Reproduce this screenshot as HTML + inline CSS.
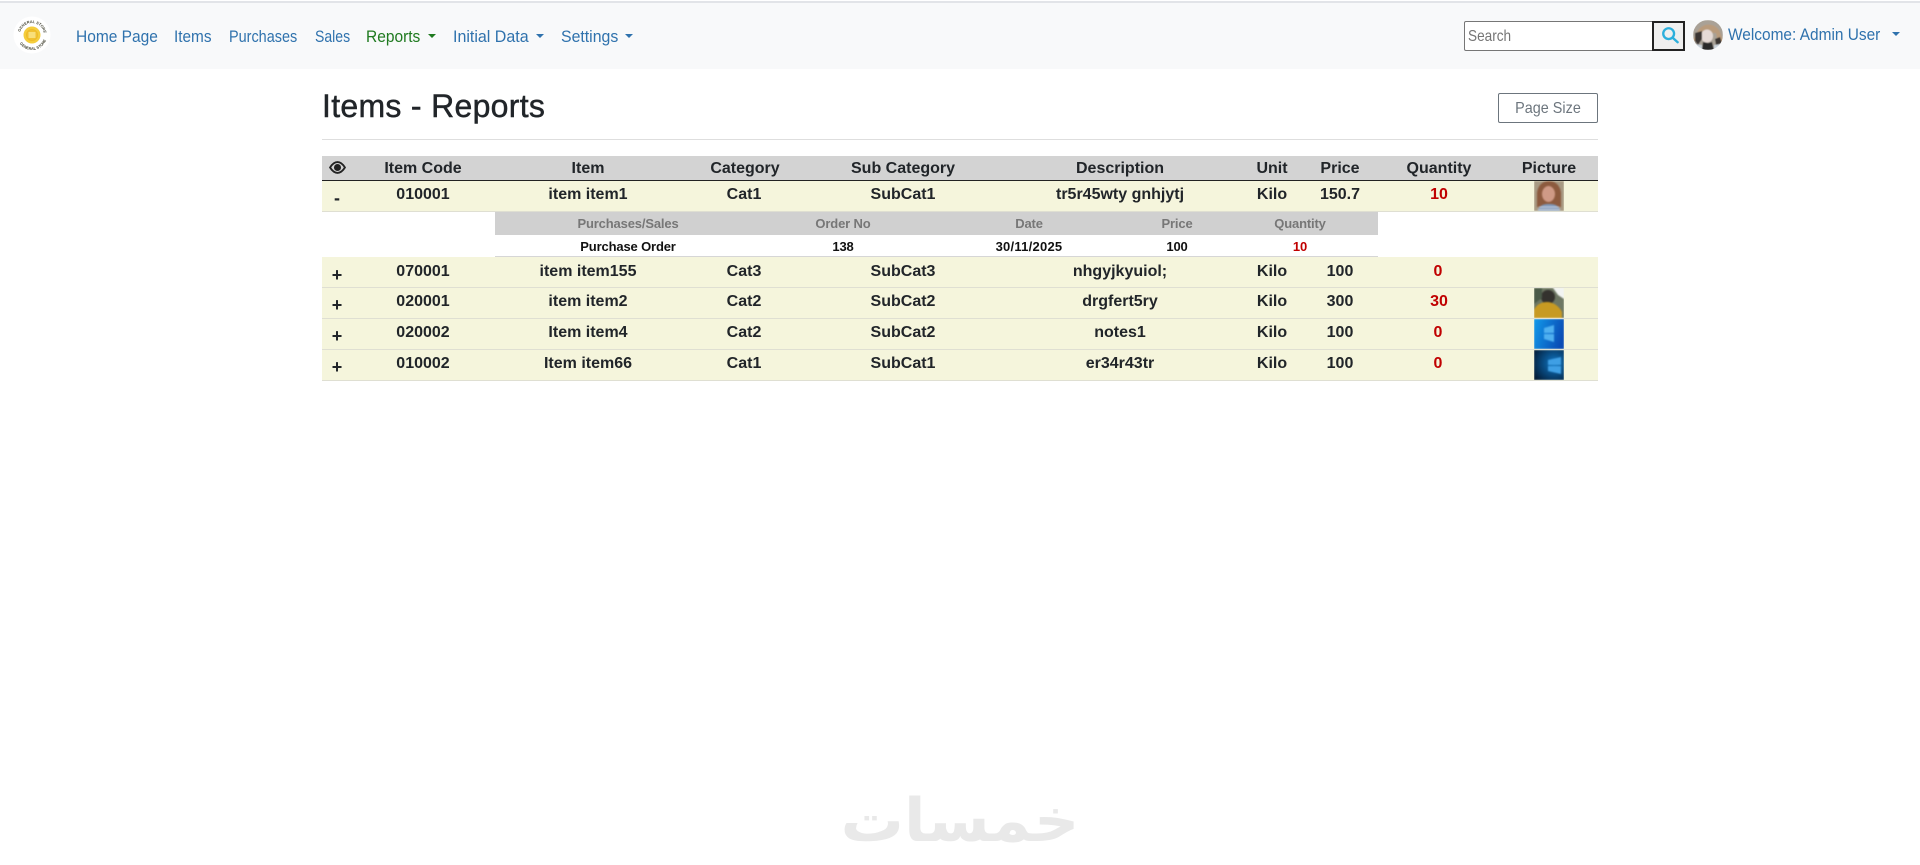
<!DOCTYPE html>
<html lang="en">
<head>
<meta charset="utf-8">
<title>Items - Reports</title>
<style>
html,body{margin:0;padding:0;width:1920px;height:865px;overflow:hidden;background:#fff;font-family:"Liberation Sans",sans-serif;color:#212529}
.a{position:absolute}
.nav{left:0;top:3px;width:1920px;height:66px;background:#f8f9fa}
.topline{left:0;top:1px;width:1920px;height:2px;background:#e2e4e8}
.l{position:absolute;top:25px;height:24px;line-height:24px;font-size:16.5px;color:#2f72ad;white-space:nowrap;transform-origin:0 50%}
.caret{position:absolute;width:0;height:0;border-left:4px solid transparent;border-right:4px solid transparent;border-top:4.5px solid #2f72ad}
.t{position:absolute;transform:translateX(-50%);white-space:nowrap;font-weight:bold;font-size:16px;height:20px;line-height:20px;color:#212529}
.s{font-size:13px;height:16px;line-height:16px;color:#111;letter-spacing:-.15px}
.h{color:#777}
.r{color:#c00000}
.bar{position:absolute;left:322px;width:1276px}
.row{background:#f5f5dc;border-bottom:1px solid #dfdfd2;box-sizing:border-box}
.pic{position:absolute;left:1534px;width:30px;height:30px;overflow:hidden}
.pic svg{display:block;width:30px;height:30px;filter:blur(.7px)}
</style>
</head>
<body>
<div class="a topline"></div>
<div class="a nav"></div>

<svg class="a" style="left:11px;top:14px" width="42" height="42" viewBox="0 0 42 42">
  <defs><path id="ringT" d="M9 21a12 12 0 0 1 24 0"/><path id="ringB" d="M6 21a15 15 0 0 0 30 0"/></defs>
  <circle cx="21" cy="21" r="18.500" fill="#fff"/>
  <circle cx="21" cy="21" r="8.500" fill="#f4cd3c"/>
  <circle cx="21" cy="21" r="5.500" fill="#f1c232" stroke="#eebb28"/>
  <rect x="17.500" y="18" width="7" height="6" fill="#f8df7a"/>
  <text font-family="Liberation Sans" font-size="3.800" font-weight="bold" fill="#4a4a3a"><textPath href="#ringT" startOffset="3">GENERAL STORE</textPath></text>
  <text font-family="Liberation Sans" font-size="3.800" font-weight="bold" fill="#4a4a3a"><textPath href="#ringB" startOffset="9">GENERAL STORE</textPath></text>
</svg>

<span class="l" style="left:76px;transform:scaleX(.94)">Home Page</span>
<span class="l" style="left:174px;transform:scaleX(.93)">Items</span>
<span class="l" style="left:229px;transform:scaleX(.875)">Purchases</span>
<span class="l" style="left:315px;transform:scaleX(.85)">Sales</span>
<span class="l" style="left:366px;color:#1f7a1f;transform:scaleX(.94)">Reports</span>
<i class="caret" style="left:428px;top:34px;border-top-color:#1f7a1f"></i>
<span class="l" style="left:453px;transform:scaleX(.97)">Initial Data</span>
<i class="caret" style="left:536px;top:34px"></i>
<span class="l" style="left:561px;transform:scaleX(.96)">Settings</span>
<i class="caret" style="left:625px;top:34px"></i>

<div class="a" style="left:1464px;top:21px;width:189px;height:30px;box-sizing:border-box;background:#fff;border:1px solid #767676;border-radius:2px 0 0 2px"></div>
<span class="a" style="left:1468px;top:23px;line-height:28px;font-size:16px;color:#757575;transform:scaleX(.85);transform-origin:0 50%">Search</span>
<div class="a" style="left:1652px;top:21px;width:33px;height:30px;box-sizing:border-box;background:#efefef;border:2px solid #222"></div>
<svg class="a" style="left:1661px;top:26px" width="18" height="18" viewBox="0 0 20 20" fill="none" stroke="#2cafdc" stroke-width="2.600"><circle cx="8.500" cy="8.500" r="6"/><path d="M13 13l5.500 5" stroke-linecap="round"/></svg>

<svg class="a" style="left:1693px;top:20px" width="30" height="30" viewBox="0 0 30 30">
  <defs><clipPath id="av"><circle cx="15" cy="15" r="15"/></clipPath><filter id="bl"><feGaussianBlur stdDeviation=".5"/></filter></defs>
  <g clip-path="url(#av)"><g filter="url(#bl)">
    <rect width="30" height="30" fill="#a9a196"/>
    <path d="M4 13C7 3 22 1 27 12l3 9-5 2-2-10H7l-3 9-4-2z" fill="#b99b7b"/>
    <ellipse cx="14" cy="16" rx="6" ry="6.500" fill="#e6dad6"/>
    <path d="M2 13l7-2 0 8-4 6-3-4zM22 19l5-2 2 6-6 2z" fill="#3a3532"/>
    <path d="M10 22l5 1 4-1 2 8H9z" fill="#2c2a2c"/>
    <path d="M0 24l9 1 0 5H0zM21 25l9-1v6h-9z" fill="#ccd4dc"/>
  </g></g>
</svg>
<span class="l" style="left:1728px;top:22.500px;transform:scaleX(.935)">Welcome: Admin User</span>
<i class="caret" style="left:1892px;top:32px"></i>

<div class="a" style="left:322px;top:84px;height:44px;line-height:44px;font-size:32px;color:#212529;letter-spacing:.3px;-webkit-text-stroke:.45px #212529;white-space:nowrap">Items - Reports</div>
<div class="a" style="left:1498px;top:93px;width:100px;height:30px;box-sizing:border-box;border:1px solid #6c757d;border-radius:2px;background:#fff"></div>
<span class="a" style="left:1498px;top:94px;width:100px;text-align:center;color:#6c757d;font-size:16px;line-height:30px;transform:scaleX(.9)">Page Size</span>
<div class="a" style="left:322px;top:139px;width:1276px;height:1px;background:#dedede"></div>

<!-- table backgrounds -->
<div class="bar" style="top:156px;height:25px;background:#d3d3d3;border-bottom:1.5px solid #222;box-sizing:border-box"></div>
<div class="bar row" style="top:181px;height:31px"></div>
<div class="bar row" style="top:257px;height:31px"></div>
<div class="bar row" style="top:288px;height:31px"></div>
<div class="bar row" style="top:319px;height:31px"></div>
<div class="bar row" style="top:350px;height:31px"></div>
<div class="a" style="left:495px;top:212px;width:883px;height:23px;background:#d0d0d0"></div>
<div class="a" style="left:495px;top:256px;width:883px;height:1px;background:#d6d6d6"></div>

<!-- header -->
<svg class="a" style="left:329px;top:161px" width="17" height="13" viewBox="0 0 18 14">
  <path d="M1 7C3.500 3 6 1.200 9 1.200S14.500 3 17 7c-2.500 4-5 5.800-8 5.800S3.500 11 1 7z" fill="none" stroke="#222" stroke-width="2"/>
  <circle cx="9" cy="7" r="3.800" fill="#222"/>
</svg>
<span class="t" style="left:423px;top:159px">Item Code</span>
<span class="t" style="left:588px;top:159px">Item</span>
<span class="t" style="left:745px;top:159px">Category</span>
<span class="t" style="left:903px;top:159px">Sub Category</span>
<span class="t" style="left:1120px;top:159px">Description</span>
<span class="t" style="left:1272px;top:159px">Unit</span>
<span class="t" style="left:1340px;top:159px">Price</span>
<span class="t" style="left:1439px;top:159px">Quantity</span>
<span class="t" style="left:1549px;top:159px">Picture</span>

<!-- row 1 -->
<span class="t" style="left:337px;top:188px;font-size:18px">-</span>
<span class="t" style="left:423px;top:185px">010001</span>
<span class="t" style="left:588px;top:185px">item item1</span>
<span class="t" style="left:744px;top:185px">Cat1</span>
<span class="t" style="left:903px;top:185px">SubCat1</span>
<span class="t" style="left:1120px;top:185px">tr5r45wty gnhjytj</span>
<span class="t" style="left:1272px;top:185px">Kilo</span>
<span class="t" style="left:1340px;top:185px">150.7</span>
<span class="t r" style="left:1439px;top:185px">10</span>
<div class="pic" style="top:181px"><svg viewBox="0 0 30 30">
  <rect width="30" height="30" fill="#a89a84"/>
  <path d="M3 26V12C4 3 10 0 15 0s11 3 12 12v14z" fill="#8c5a3e"/>
  <ellipse cx="14.500" cy="13" rx="6.500" ry="8" fill="#cf9a86"/>
  <path d="M4 30c1-6 6-7 11-7s10 1 11 7z" fill="#7f97b8"/>
  <path d="M5 26h20M4 28.500h22" stroke="#cfd6e2" stroke-width="1"/>
</svg></div>

<!-- sub table -->
<span class="t s h" style="left:628px;top:216px">Purchases/Sales</span>
<span class="t s h" style="left:843px;top:216px">Order No</span>
<span class="t s h" style="left:1029px;top:216px">Date</span>
<span class="t s h" style="left:1177px;top:216px">Price</span>
<span class="t s h" style="left:1300px;top:216px">Quantity</span>
<span class="t s" style="left:628px;top:239px">Purchase Order</span>
<span class="t s" style="left:843px;top:239px">138</span>
<span class="t s" style="left:1029px;top:239px;letter-spacing:.25px">30/11/2025</span>
<span class="t s" style="left:1177px;top:239px">100</span>
<span class="t s r" style="left:1300px;top:239px;color:#c00000">10</span>

<!-- row 2 -->
<span class="t" style="left:337px;top:265px;font-size:18px">+</span>
<span class="t" style="left:423px;top:262px">070001</span>
<span class="t" style="left:588px;top:262px">item item155</span>
<span class="t" style="left:744px;top:262px">Cat3</span>
<span class="t" style="left:903px;top:262px">SubCat3</span>
<span class="t" style="left:1120px;top:262px">nhgyjkyuiol;</span>
<span class="t" style="left:1272px;top:262px">Kilo</span>
<span class="t" style="left:1340px;top:262px">100</span>
<span class="t r" style="left:1438px;top:262px">0</span>

<!-- row 3 -->
<span class="t" style="left:337px;top:295px;font-size:18px">+</span>
<span class="t" style="left:423px;top:292px">020001</span>
<span class="t" style="left:588px;top:292px">item item2</span>
<span class="t" style="left:744px;top:292px">Cat2</span>
<span class="t" style="left:903px;top:292px">SubCat2</span>
<span class="t" style="left:1120px;top:292px">drgfert5ry</span>
<span class="t" style="left:1272px;top:292px">Kilo</span>
<span class="t" style="left:1340px;top:292px">300</span>
<span class="t r" style="left:1439px;top:292px">30</span>
<div class="pic" style="top:288px"><svg viewBox="0 0 30 30">
  <rect width="30" height="30" fill="#6d7763"/>
  <path d="M19 0h11v11l-6-4z" fill="#f2f4f2"/>
  <circle cx="14" cy="9" r="7" fill="#34322e"/>
  <path d="M0 30V22c2-5 7-8 13-8s12 4 15 10v6z" fill="#c79a22"/>
  <path d="M0 0h8v10L0 16z" fill="#4a5a48"/>
</svg></div>

<!-- row 4 -->
<span class="t" style="left:337px;top:326px;font-size:18px">+</span>
<span class="t" style="left:423px;top:323px">020002</span>
<span class="t" style="left:588px;top:323px">Item item4</span>
<span class="t" style="left:744px;top:323px">Cat2</span>
<span class="t" style="left:903px;top:323px">SubCat2</span>
<span class="t" style="left:1120px;top:323px">notes1</span>
<span class="t" style="left:1272px;top:323px">Kilo</span>
<span class="t" style="left:1340px;top:323px">100</span>
<span class="t r" style="left:1438px;top:323px">0</span>
<div class="pic" style="top:319px"><svg viewBox="0 0 30 30">
  <defs><linearGradient id="w1" x1="0" y1="0" x2="1" y2="0.300"><stop offset="0" stop-color="#12a0ee"/><stop offset="1" stop-color="#0a4bb5"/></linearGradient></defs>
  <rect x="-2" y="-2" width="34" height="34" fill="url(#w1)"/>
  <path d="M10 9l10-3v8h-10zM10 15h10v8l-10-3z" fill="#4fb0f0"/>
</svg></div>

<!-- row 5 -->
<span class="t" style="left:337px;top:357px;font-size:18px">+</span>
<span class="t" style="left:423px;top:354px">010002</span>
<span class="t" style="left:588px;top:354px">Item item66</span>
<span class="t" style="left:744px;top:354px">Cat1</span>
<span class="t" style="left:903px;top:354px">SubCat1</span>
<span class="t" style="left:1120px;top:354px">er34r43tr</span>
<span class="t" style="left:1272px;top:354px">Kilo</span>
<span class="t" style="left:1340px;top:354px">100</span>
<span class="t r" style="left:1438px;top:354px">0</span>
<div class="pic" style="top:350px"><svg viewBox="0 0 30 30">
  <defs><radialGradient id="w2" cx=".65" cy=".45" r=".7"><stop offset="0" stop-color="#0f76c4"/><stop offset="1" stop-color="#021a35"/></radialGradient></defs>
  <rect x="-2" y="-2" width="34" height="34" fill="url(#w2)"/>
  <path d="M14 10l13-3v8H14zM14 16h13v8l-13-3z" fill="#3f9fe4"/>
</svg></div>

<!-- watermark -->
<div class="a" style="left:845px;top:786px;width:230px;height:70px;line-height:70px;text-align:center;font-family:'DejaVu Sans',sans-serif;font-weight:bold;font-size:60px;color:#e9e9e9;transform:scaleX(1.050);white-space:nowrap" dir="rtl" lang="ar">خمسات</div>
</body>
</html>
